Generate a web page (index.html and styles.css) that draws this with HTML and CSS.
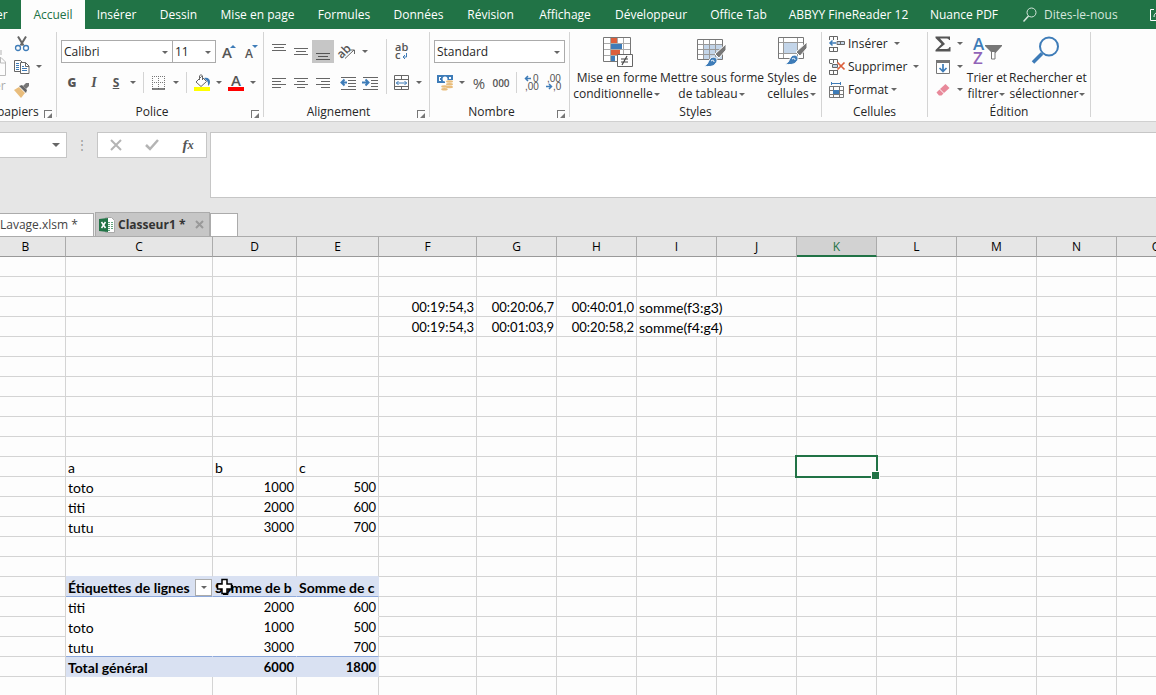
FILE: index.html
```html
<!DOCTYPE html>
<html lang="fr">
<head>
	<meta charset="utf-8">
	<meta name="viewport" content="width=device-width, initial-scale=1.0">
	<title>Classeur1</title>
	<link rel="stylesheet" href="styles.css">
</head>
<body>
	<nav class="tabs">
		<a href="#" class="tab cut">er</a>
		<a href="#" class="tab active">Accueil</a>
		<a href="#" class="tab">Insérer</a>
		<a href="#" class="tab">Dessin</a>
		<a href="#" class="tab">Mise en page</a>
		<a href="#" class="tab">Formules</a>
		<a href="#" class="tab">Données</a>
		<a href="#" class="tab">Révision</a>
		<a href="#" class="tab">Affichage</a>
		<a href="#" class="tab">Développeur</a>
		<a href="#" class="tab">Office Tab</a>
		<a href="#" class="tab">ABBYY FineReader 12</a>
		<a href="#" class="tab">Nuance PDF</a>
		<a href="#" class="tab tell">
			<svg width="16" height="16" viewBox="0 0 16 16" fill="none" stroke="#d5e6dc"><circle cx="9.5" cy="5.500" r="4.500"/><path d="M6.500 9L1.500 14.500" stroke-width="1.500"/></svg>
			Dites-le-nous
		</a>
		<a href="#" class="tab share" title="Partager">
			<svg width="16" height="16" viewBox="0 0 16 16" fill="none" stroke="#fff"><path d="M4 2.500H.5v11h13V9M4 10c0-4 3-5 7-5M8 2l4 3-4 3"/></svg>
		</a>
	</nav>

	<div class="ribbon">
		<section class="group clipboard">
			<div class="body">
				<button class="paste" disabled>
					<svg width="8" height="32" viewBox="0 0 8 32"><path d="M0 4h2v5H0z" fill="#d8d8d8"/><path d="M0 11.500h1l4.500 4.500v13.500H0M0.500 12v5H5" fill="none" stroke="#bbb"/></svg>
					<span>er</span>
				</button>
				<div class="stack">
					<div class="row">
						<button class="btn" title="Couper"><svg width="16" height="16" viewBox="0 0 16 16" fill="none"><path d="M4 0.500l5.500 9M12 0.500l-5.500 9" stroke="#666" stroke-width="2"/><circle cx="4" cy="12" r="2.500" stroke="#3e7cb8" stroke-width="1.300"/><circle cx="12" cy="12" r="2.500" stroke="#3e7cb8" stroke-width="1.300"/></svg></button>
					</div>
					<div class="row">
						<button class="btn" title="Copier"><svg width="16" height="16" viewBox="0 0 16 16" stroke="#666"><path d="M.5 1.500h6l2.500 2.500v8.500H.5z" fill="#fff"/><path d="M2 4.500h3M2 6.500h3M2 8.500h3M2 10.500h3" stroke="#3e7cb8"/><path d="M6.500 3.500h5l3.500 3.500v7.500H6.500z" fill="#fff"/><path d="M11.500 3.500v4H15" fill="none"/><path d="M8 7.500h2M8 9.500h5M8 11.500h5" stroke="#3e7cb8"/></svg></button>
						<span class="caret"></span>
					</div>
					<div class="row">
						<button class="btn" title="Reproduire la mise en forme"><svg width="16" height="16" viewBox="0 0 16 16"><path d="M0 8l5-3 6 6-4 5z" fill="#e9bd7c"/><path d="M5 4l3-1 5 5-1 3z" fill="#666"/><path d="M9 4l3-3h3v3l-3 3z" fill="#777"/></svg></button>
					</div>
				</div>
			</div>
			<footer><span>papiers</span><button class="launch" title="Presse-papiers"></button></footer>
		</section>

		<section class="group font">
			<div class="body lines">
				<div class="row">
					<label class="combo name"><select aria-label="Police"><option>Calibri</option></select></label>
					<label class="combo size"><select aria-label="Taille"><option>11</option></select></label>
					<button class="btn grow" title="Augmenter la taille"><svg width="16" height="18" viewBox="0 0 16 18"><text x="0" y="15" class="glyph" font-size="15">A</text><path d="M8 5l3-3 3 3z" fill="#3e7cb8"/></svg></button>
					<button class="btn" title="Réduire la taille"><svg width="16" height="18" viewBox="0 0 16 18"><text x="1" y="15" class="glyph" font-size="12">A</text><path d="M8 2l3 3 3-3z" fill="#3e7cb8"/></svg></button>
				</div>
				<div class="row">
					<button class="btn bold" title="Gras">G</button>
					<button class="btn italic" title="Italique">I</button>
					<button class="btn under" title="Souligné">S</button>
					<span class="caret"></span>
					<span class="sep"></span>
					<button class="btn" title="Bordures"><svg width="14" height="14" viewBox="0 0 14 14" fill="none" stroke="#777"><path d="M0 .5h13M0 6.500h13M.5 0v13M6.500 0v13M12.500 0v13" stroke-dasharray="1 1"/><path d="M0 13h13" stroke="#555" stroke-width="1.500"/></svg></button>
					<span class="caret"></span>
					<span class="sep"></span>
					<button class="btn" title="Couleur de remplissage"><svg width="16" height="17" viewBox="0 0 16 17"><path d="M2 8l5.500-5.500 5 5-5.500 5z" fill="#fff" stroke="#666"/><path d="M5.500 6V2q1.500-3 3 0v4" fill="none" stroke="#666"/><path d="M10 4c4-1 6 1 6 4 0 2-1 3-2 4 0-3 0-4-1-5z" fill="#3e7cb8"/><path d="M0 13h16v4H0z" fill="#ff0"/></svg></button>
					<span class="caret"></span>
					<button class="btn" title="Couleur de police"><svg width="16" height="17" viewBox="0 0 16 17"><text x="3" y="12" class="glyph" font-size="15">A</text><path d="M0 13h16v4H0z" fill="#f00"/></svg></button>
					<span class="caret"></span>
				</div>
			</div>
			<footer><span>Police</span><button class="launch" title="Police"></button></footer>
		</section>

		<section class="group align">
			<div class="body">
				<div class="lines">
					<div class="row">
						<button class="btn" title="Aligner en haut"><svg width="14" height="18" viewBox="0 0 14 18" stroke="#666"><path d="M0 1.500h14M2 4.500h10M0 7.500h14"/></svg></button>
						<button class="btn" title="Aligner au centre"><svg width="14" height="18" viewBox="0 0 14 18" stroke="#666"><path d="M0 5.500h14M2 8.500h10M0 11.500h14"/></svg></button>
						<button class="btn on" title="Aligner en bas"><svg width="14" height="18" viewBox="0 0 14 18" stroke="#555"><path d="M0 10.500h14M2 13.500h10M0 16.500h14"/></svg></button>
						<button class="btn gap" title="Orientation"><svg width="18" height="18" viewBox="0 0 18 18"><text transform="rotate(-45 6 10)" x="-1" y="12" class="glyph" font-size="12">ab</text><path d="M6 15.500L15 7M11 7h4.500v4" fill="none" stroke="#666"/></svg></button>
						<span class="caret"></span>
					</div>
					<div class="row">
						<button class="btn" title="Aligner à gauche"><svg width="14" height="12" viewBox="0 0 14 12" stroke="#666"><path d="M0 1.500h14M0 4.500h9M0 7.500h14M0 10.500h9"/></svg></button>
						<button class="btn" title="Centrer"><svg width="14" height="12" viewBox="0 0 14 12" stroke="#666"><path d="M0 1.500h14M3 4.500h8M0 7.500h14M3 10.500h8"/></svg></button>
						<button class="btn" title="Aligner à droite"><svg width="14" height="12" viewBox="0 0 14 12" stroke="#666"><path d="M0 1.500h14M5 4.500h9M0 7.500h14M5 10.500h9"/></svg></button>
						<button class="btn gap" title="Diminuer le retrait"><svg width="16" height="14" viewBox="0 0 16 14" stroke="#666"><path d="M1 1.500h15M8 4.500h8M8 7.500h8M8 10.500h8M1 13.500h15"/><path d="M7 6.500H1.500M4.500 3.500l-3 3 3 3" fill="none" stroke="#3e7cb8" stroke-width="2"/></svg></button>
						<button class="btn" title="Augmenter le retrait"><svg width="16" height="14" viewBox="0 0 16 14" stroke="#666"><path d="M1 1.500h15M9 4.500h7M9 7.500h7M9 10.500h7M1 13.500h15"/><path d="M0 6.500h6M3.500 3.500l3 3-3 3" fill="none" stroke="#3e7cb8" stroke-width="2"/></svg></button>
					</div>
				</div>
				<span class="sep tall"></span>
				<div class="lines">
					<div class="row">
						<button class="btn" title="Renvoyer à la ligne"><svg width="14" height="18" viewBox="0 0 14 18"><text x="0" y="8" class="glyph" font-size="11">ab</text><text x="0" y="16" class="glyph" font-size="11">c</text><path d="M11.500 10v4H8M10 12l-2 2 2 2" fill="none" stroke="#3e7cb8"/></svg></button>
					</div>
					<div class="row">
						<button class="btn" title="Fusionner et centrer"><svg width="16" height="16" viewBox="0 0 16 16" fill="none" stroke="#666"><path d="M.5 .5h14v14H.5zM0 4.500h15M0 11.500h15M7.500 0v4.500M7.500 11v4"/><path d="M2 8h11M4.500 6L2.500 8l2 2M10.500 6l2 2-2 2" stroke="#3e7cb8"/></svg></button>
						<span class="caret"></span>
					</div>
				</div>
			</div>
			<footer><span>Alignement</span><button class="launch" title="Alignement"></button></footer>
		</section>

		<section class="group number">
			<div class="body lines">
				<div class="row">
					<label class="combo format"><select aria-label="Format de nombre"><option>Standard</option></select></label>
				</div>
				<div class="row">
					<button class="btn" title="Format monétaire"><svg width="17" height="17" viewBox="0 0 17 17"><path d="M0 1h16v8H0z" fill="#3e7cb8"/><path d="M2 3h2v1H3v2h1v1H2zM12 3h2v2h-2z" fill="#fff"/><circle cx="8" cy="5" r="2.500" fill="#fff"/><path d="M8 6h9v9h-5v2H4v-5h4z" fill="#fdfdfd"/><g fill="#e9bd7c"><ellipse cx="12.500" cy="7.500" rx="3.500" ry="1.200"/><ellipse cx="12.500" cy="10.300" rx="3.500" ry="1.200"/><ellipse cx="12.500" cy="13" rx="3.500" ry="1.200"/><ellipse cx="7.500" cy="12.500" rx="3.300" ry="1.200"/><ellipse cx="7.500" cy="15.300" rx="3.300" ry="1.200"/></g></svg></button>
					<span class="caret"></span>
					<button class="btn percent" title="Pourcentage">%</button>
					<button class="btn thousands" title="Milliers">000</button>
					<span class="sep"></span>
					<button class="btn" title="Ajouter une décimale"><svg width="16" height="16" viewBox="0 0 16 16"><text x="9" y="7" class="glyph thin" font-size="10">0</text><text x="1" y="15" class="glyph thin" font-size="10">,00</text><path d="M7 3.500H1.500M4 1L1.500 3.500 4 6" fill="none" stroke="#3e7cb8" stroke-width="1.500"/></svg></button>
					<button class="btn" title="Réduire les décimales"><svg width="16" height="16" viewBox="0 0 16 16"><text x="1" y="7" class="glyph thin" font-size="10">,00</text><text x="7" y="15" class="glyph thin" font-size="10">,0</text><path d="M0 11.500h5.500M3 9l2.500 2.500L3 14" fill="none" stroke="#3e7cb8" stroke-width="1.500"/></svg></button>
				</div>
			</div>
			<footer><span>Nombre</span><button class="launch" title="Nombre"></button></footer>
		</section>

		<section class="group styles">
			<div class="body">
				<button class="big">
					<svg width="32" height="32" viewBox="0 0 32 32"><path d="M2.500 1.500h27v24h-27z" fill="#fff"/><path d="M9.500 1v25M16.500 1v25M22.500 1v25M2 7.500h28M2 13.500h28M2 19.500h28" stroke="#aaa"/><path d="M10 2h6v5h-6zM10 14h9v5h-9z" fill="#dc5f3c"/><path d="M10 8h11v5H10zM10 20h4v5h-4z" fill="#3e7cb8"/><path d="M2.500 1.500h27v24h-27z" fill="none" stroke="#777"/><path d="M16.500 18.500h15v12h-15z" fill="#fff" stroke="#666"/><path d="M20 23h7M20 26h7M26 20l-5 9" stroke="#444" stroke-width="1.200"/></svg>
					<span>Mise en forme</span><span>conditionnelle<i class="caret"></i></span>
				</button>
				<button class="big">
					<svg width="32" height="32" viewBox="0 0 32 32"><path d="M1.500 3.500h25v20h-25z" fill="#fff"/><path d="M8 9h18v14H8z" fill="#c3d5e9"/><path d="M7.500 4v20M13.500 4v20M19.500 4v20M2 8.500h25M2 13.500h25M2 18.500h25" stroke="#999"/><path d="M1.500 3.500h25v20h-25z" fill="none" stroke="#777"/><path d="M30 8v6l-7 8-4-4z" fill="#777" stroke="#fff"/><path d="M8 30c5-1 4-8 9-9 4 0 5 4 3 6-2 4-8 4-12 3z" fill="#3e7cb8" stroke="#fff"/><path d="M15 25q3-2 3 1" fill="none" stroke="#fff"/></svg>
					<span>Mettre sous forme</span><span>de tableau<i class="caret"></i></span>
				</button>
				<button class="big">
					<svg width="32" height="32" viewBox="0 0 32 32"><path d="M2.500 1.500h25v21h-25z" fill="#fff"/><path d="M8 7h14v10H8z" fill="#c3d5e9"/><path d="M7.500 2v21M21.500 2v21M2 6.500h25M2 17.500h25" stroke="#999"/><path d="M2.500 1.500h25v21h-25z" fill="none" stroke="#777"/><path d="M31 6v6l-7 8-4-4z" fill="#777" stroke="#fff"/><path d="M9 28c5-1 4-8 9-9 4 0 5 4 3 6-2 4-8 4-12 3z" fill="#3e7cb8" stroke="#fff"/><path d="M16 23q3-2 3 1" fill="none" stroke="#fff"/></svg>
					<span>Styles de</span><span>cellules<i class="caret"></i></span>
				</button>
			</div>
			<footer><span>Styles</span></footer>
		</section>

		<section class="group cells">
			<div class="body stack">
				<div class="row">
					<button class="text"><svg width="16" height="16" viewBox="0 0 16 16" fill="none" stroke="#666"><path d="M.5 4V.5h8V4M4.500 0v4M.5 11v4.500h8V11M.5 11.500h8M4.500 11v4"/><path d="M8 5.500h7.500v3H8zM11.500 5.500v3" fill="#c3d5e9"/><path d="M7 7H1M3.500 4.500L1 7l2.500 2.500" stroke="#3e7cb8" stroke-width="1.500"/></svg>Insérer</button><span class="caret far"></span>
				</div>
				<div class="row">
					<button class="text"><svg width="16" height="16" viewBox="0 0 16 16" fill="none" stroke="#666"><path d="M.5 4V.5h8V4M4.500 0v4M.5 11v4.500h8V11M.5 11.500h8M4.500 11v4M.5 4.500h3"/><path d="M3.500 5.500h5v3h-5z" fill="#c3d5e9"/><path d="M8.500 3.500l7 7M15.500 3.500l-7 7" stroke="#dc5f3c" stroke-width="1.700"/></svg>Supprimer</button><span class="caret far"></span>
				</div>
				<div class="row">
					<button class="text"><svg width="16" height="16" viewBox="0 0 16 16" fill="none" stroke="#777"><path d="M.5 4.500h14v11H.5zM0 8.500h15M0 12.500h15M4.500 4v12M10.500 4v12"/><path d="M4 8h6v4H4z" fill="#3e7cb8" stroke="none"/><path d="M2 1.500h10M2.500 0v3M11.500 0v3" stroke="#3e7cb8"/></svg>Format</button><span class="caret"></span>
				</div>
			</div>
			<footer><span>Cellules</span></footer>
		</section>

		<section class="group edit">
			<div class="body">
				<div class="stack">
					<div class="row">
						<button class="btn" title="Somme automatique"><svg width="16" height="16" viewBox="0 0 16 16"><path d="M.5 .5H15V4h-1q0-1.500-2-1.500H5L10 8l-6 5h8q2 0 2.500-2h1V15.500H.5V14l6-6L.5 2z" fill="#555"/></svg></button>
						<span class="caret"></span>
					</div>
					<div class="row">
						<button class="btn" title="Remplissage"><svg width="14" height="16" viewBox="0 0 14 16"><path d="M.5 1.500h13v13H.5z" fill="#fff" stroke="#777"/><path d="M0 1h14v3H0z" fill="#777"/><path d="M7 5v7M3.500 9L7 12.500 10.500 9" fill="none" stroke="#3e7cb8" stroke-width="1.700"/></svg></button>
						<span class="caret"></span>
					</div>
					<div class="row">
						<button class="btn" title="Effacer"><svg width="14" height="14" viewBox="0 0 14 14"><path d="M4 6l5.500-5 4 4L8 10z" fill="#e8899a"/><path d="M3.500 6.500l4 4L5.500 12.500H3L.5 9.500z" fill="#e8899a"/></svg></button>
						<span class="caret"></span>
					</div>
				</div>
				<button class="big">
					<svg width="32" height="32" viewBox="0 0 32 32"><text x="2" y="14" font-size="17" class="letter" fill="#3e7cb8">A</text><text x="2" y="28" font-size="17" class="letter" fill="#9164b8">Z</text><path d="M14 9h17v1l-6.500 7H21l-7-7z" fill="#777"/><path d="M20.500 16v7h3.500v-7" fill="#fff" stroke="#777"/></svg>
					<span>Trier et</span><span>filtrer<i class="caret"></i></span>
				</button>
				<button class="big">
					<svg width="32" height="32" viewBox="0 0 32 32" fill="none" stroke="#3e7cb8"><circle cx="17" cy="10.500" r="9" stroke-width="2"/><path d="M10 17.500L1 26.500" stroke-width="3.500"/></svg>
					<span>Rechercher et</span><span>sélectionner<i class="caret"></i></span>
				</button>
			</div>
			<footer><span>Édition</span></footer>
		</section>
	</div>

	<div class="formula">
		<label class="namebox"><select aria-label="Zone Nom"><option></option></select></label>
		<span class="dots">⋮</span>
		<div class="fxbar">
			<button title="Annuler"><svg width="12" height="12" viewBox="0 0 12 12" stroke="#b4b4b4" stroke-width="2"><path d="M1 1l10 10M11 1L1 11"/></svg></button>
			<button title="Entrer"><svg width="14" height="12" viewBox="0 0 14 12" fill="none" stroke="#b4b4b4" stroke-width="2.500"><path d="M1 6l4 4 8-9"/></svg></button>
			<button title="Insérer une fonction" class="fx">f<small>x</small></button>
		</div>
		<textarea class="input" aria-label="Barre de formule"></textarea>
	</div>

	<div class="books">
		<button class="book first">Lavage.xlsm *</button>
		<button class="book current">
			<svg width="16" height="16" viewBox="0 0 16 16"><path d="M6.500 .5h6l3 3v12h-9z" fill="#fff" stroke="#aaa"/><path d="M9 5.500h2M12 5.500h2M9 7.500h2M12 7.500h2M9 9.500h2M12 9.500h2M9 11.500h2M12 11.500h2M9 13.500h2" stroke="#5fa57c"/><path d="M0 2l9-1v14l-9-1z" fill="#217346"/><path d="M2.500 5l4 6M6.500 5l-4 6" stroke="#fff" stroke-width="1.500"/></svg>
			<span>Classeur1 *</span>
			<svg class="close" width="9" height="9" viewBox="0 0 9 9" stroke="#999" stroke-width="2"><path d="M1 1l7 7M8 1L1 8"/></svg>
		</button>
		<button class="book new" title="Nouveau"></button>
	</div>

	<main class="sheet">
		<table id="grid"></table>
		<svg class="pointer" width="17" height="17" viewBox="0 0 17 17"><path d="M6 1.500h5V6h4.500v5H11v4.500H6V11H1.500V6H6z" fill="#fff" stroke="#000" stroke-width="1.500"/><path d="M7 16.500h5V12h4.500V7" fill="none" stroke="#000"/></svg>
	</main>
	<script src="grid.js"></script>
</body>
</html>
```
FILE: styles.css
```css
* { box-sizing: border-box; }
body { margin: 0; height: 100vh; display: flex; flex-direction: column; overflow: hidden; background: #e6e6e6; color: #262626; font: 12px/16px "Open Sans", sans-serif; }
button, select, textarea { font: inherit; color: inherit; border: 0; padding: 0; margin: 0; background: none; border-radius: 0; }
svg { display: block; flex: none; overflow: visible; }

/* onglets du ruban */
.tabs { display: grid; grid-template-columns: 21px 64px 63px 61px 97px 76px 73px 71px 78px 94px 81px 139px 92px 1fr 16px; height: 29px; background: #217346; flex: none; overflow: hidden; }
.tab { display: flex; align-items: center; justify-content: center; color: #fff; text-decoration: none; white-space: nowrap; }
.tab.cut { justify-content: flex-start; margin-left: -4px; }
.tab.active { background: #fdfdfd; color: #217346; }
.tab.tell { justify-content: flex-start; gap: 6px; padding-left: 12px; color: #d5e6dc; }
.tab.share { justify-content: flex-start; padding-left: 10px; }

/* ruban */
.ribbon { display: flex; height: 93px; flex: none; background: #fdfdfd; border-bottom: 1px solid #d0d0d0; padding: 3px 0 4px; overflow: hidden; }
.group { display: flex; flex-direction: column; flex: none; border-right: 1px solid #d4d4d4; padding-left: 4px; }
.group .body { display: flex; height: 75px; flex: none; }
.clipboard { width: 57px; padding-left: 0; }
.font { width: 207px; }
.align { width: 166px; }
.number { width: 140px; }
.styles { width: 252px; }
.cells { width: 106px; }
.edit { width: 163px; }
.group footer { display: flex; align-items: center; justify-content: center; height: 10px; padding-right: 20px; position: relative; }
.group.clipboard footer { justify-content: flex-start; margin-left: -3px; }
.group.styles footer, .group.cells footer, .group.edit footer { padding-right: 4px; }
.launch { position: absolute; right: 4px; top: 3px; width: 8px; height: 8px; border: solid #777; border-width: 1px 0 0 1px; }
.launch::after { content: ""; position: absolute; right: 0; bottom: 0; border: solid transparent; border-width: 5px 0 0 5px; border-bottom: 0; border-right: 5px solid #777; border-left: 0; }
.row { display: flex; align-items: center; height: 23px; }
.group .lines { display: flex; flex-direction: column; gap: 8px; padding-top: 8px; }
.group .stack { display: flex; flex-direction: column; }
.btn { display: flex; align-items: center; justify-content: center; width: 22px; height: 23px; flex: none; }
.btn.on { background: #c6c6c6; }
.btn.gap { margin-left: 3px; }
.btn.grow { margin-left: 3px; }
.bold { font-weight: 800; color: #555; }
.italic { font: italic bold 14px "Liberation Serif", serif; color: #555; }
.under { font-weight: 700; text-decoration: underline; color: #555; }
.percent { font-size: 15px; color: #555; }
.thousands { font-size: 10px; font-weight: 600; color: #555; }
.glyph { font-family: "Open Sans", sans-serif; font-weight: 600; fill: #555; }
.glyph.thin { font-family: "Liberation Sans", sans-serif; font-weight: 400; }
.letter { font-family: "Open Sans", sans-serif; font-weight: 600; }
.caret { display: flex; align-items: center; justify-content: center; width: 12px; flex: none; }
.caret::before, .combo::after, .namebox::after { content: ""; border: solid transparent; border-width: 3px 3px 0; border-top-color: #666; }
.sep { width: 1px; height: 21px; background: #d4d4d4; margin: 0 4px; }
.sep.tall { height: 55px; margin: 7px 4px 0 5px; }
.combo { position: relative; display: block; height: 23px; border: 1px solid #ababab; background: #fff; }
.combo select { width: 100%; height: 21px; padding-left: 2px; appearance: none; }
.combo::after, .namebox::after { position: absolute; right: 4px; top: 10px; pointer-events: none; }
.combo.name { width: 112px; }
.combo.size { width: 44px; margin-left: -1px; }
.combo.format { width: 131px; }

.paste { width: 11px; color: #aaa; text-align: left; overflow: hidden; }
.paste span { display: block; margin-left: -6px; }
.text { display: flex; align-items: center; gap: 3px; padding-left: 3px; }
.caret.far { margin-left: 3px; }
.big { display: flex; flex-direction: column; align-items: center; padding-top: 4px; white-space: nowrap; line-height: 16px; flex: none; }
.big svg { margin-bottom: 2px; }
.big span { display: flex; align-items: center; }
.big .caret { width: 8px; }
.styles .body { display: grid; grid-template-columns: 86px 104px 56px; }
.edit .body { display: grid; grid-template-columns: 34px 42px 80px; }

/* barre de formule */
.formula { display: flex; align-items: flex-start; padding-top: 10px; height: 90px; flex: none; }
.namebox { position: relative; width: 67px; height: 26px; border: 1px solid #c6c6c6; border-left: 0; background: #fff; }
.namebox select { width: 100%; height: 24px; appearance: none; }
.namebox::after { right: 6px; border-width: 4px 4px 0; }
.dots { width: 30px; text-align: center; line-height: 26px; color: #999; }
.fxbar { display: grid; grid-template-columns: repeat(3, 1fr); width: 110px; height: 26px; border: 1px solid #c6c6c6; background: #fff; margin-right: 3px; }
.fxbar button { display: flex; align-items: center; justify-content: center; }
.fxbar .fx { font: italic bold 15px "Liberation Serif", serif; color: #555; }
.input { flex: 1; height: 66px; border: 1px solid #c6c6c6; border-right: 0; background: #fff; resize: none; }

/* onglets de classeurs */
.books { display: flex; align-items: flex-end; height: 24px; flex: none; }
.book { display: flex; align-items: center; height: 23px; border: 1px solid #ababab; border-bottom: 0; background: #fff; white-space: nowrap; color: #444; }
.book.first { width: 94px; border-left: 0; margin-right: 1px; }
.book.current { width: 115px; height: 24px; padding: 0 5px 0 3px; gap: 3px; background: #c6c6c6; font-weight: 700; color: #333; }
.book .close { margin-left: auto; }
.book.new { width: 28px; }

/* feuille */
.sheet { position: relative; flex: 1; overflow: hidden; background: #fdfdfd; border-top: 1px solid #ababab; color: #000; font: 14px/17px Lato, sans-serif; }
#grid { width: calc(100% + 14px); margin-left: -14px; table-layout: fixed; border-spacing: 0; }
#grid th { height: 20px; padding: 0; font: 12px/18px "Open Sans", sans-serif; background: #e6e6e6; border-right: 1px solid #ababab; border-bottom: 1px solid #999; }
#grid th.sel { background: #d2d2d2; color: #217346; line-height: 17px; border-bottom: 2px solid #217346; }
#grid td { height: 20px; padding: 2px 2px 0; white-space: nowrap; border-right: 1px solid #d4d4d4; border-bottom: 1px solid #d4d4d4; }
#grid td.num { text-align: right; font-size: 13px; }
#grid td.spill { border-right-color: transparent; }
#grid td.over { border-bottom-color: #d9e1f2; }
#grid td.pivot { border-color: transparent; }
#grid td.edge { border-right-color: #d4d4d4; }
#grid td.head, #grid td.total { background: #d9e1f2; font-weight: 700; border-color: #d9e1f2; }
#grid td.head, #grid td.last { border-bottom-color: #8ea9db; }
#grid td.active { position: relative; }
#grid td.active::before { content: ""; position: absolute; inset: -2px; border: 2px solid #217346; }
#grid td.active::after { content: ""; position: absolute; right: -4px; bottom: -4px; width: 7px; height: 7px; background: #217346; border: 1px solid #fdfdfd; }
.head .wrap { display: flex; align-items: center; justify-content: space-between; height: 17px; }
.filter { display: flex; align-items: center; justify-content: center; width: 17px; height: 17px; margin-right: -2px; background: #fff; border: 1px solid #ababab; }
.pointer { position: absolute; left: 216px; top: 341px; }
```
FILE: grid.js
```js
var widths = { B: 80, C: 147, D: 84, E: 82, F: 98 };
var cols = 'BCDEFGHIJKLMNOPQRST'.split('');
var rows = 50;
var active = 'K11';
var data = {
	F3: '00:19:54,3', G3: '00:20:06,7', H3: '00:40:01,0', I3: 'somme(f3:g3)',
	F4: '00:19:54,3', G4: '00:01:03,9', H4: '00:20:58,2', I4: 'somme(f4:g4)',
	C11: 'a', D11: 'b', E11: 'c',
	C12: 'toto', D12: '1000', E12: '500',
	C13: 'titi', D13: '2000', E13: '600',
	C14: 'tutu', D14: '3000', E14: '700',
	C17: 'Étiquettes de lignes', D17: 'Somme de b', E17: 'Somme de c',
	C18: 'titi', D18: '2000', E18: '600',
	C19: 'toto', D19: '1000', E19: '500',
	C20: 'tutu', D20: '3000', E20: '700',
	C21: 'Total général', D21: '6000', E21: '1800'
};

function cellClass(c, r) {
	var k = [], v = data[c + r] || '';
	if (/^\d/.test(v)) k.push('num');
	if (c == 'I' && v) k.push('spill');
	if ('CDE'.indexOf(c) >= 0) {
		if (r == 16) k.push('over');
		if (r == 17) k.push('head');
		if (r >= 18 && r <= 20) k.push('pivot');
		if (r >= 18 && r <= 20 && c == 'E') k.push('edge');
		if (r == 20) k.push('last');
		if (r == 21) k.push('total');
	}
	if (c + r == active) k.push('active');
	return k.join(' ');
}

var html = '<colgroup>';
cols.forEach(function (c) { html += '<col style="width:' + (widths[c] || 80) + 'px">'; });
html += '</colgroup><thead><tr>';
cols.forEach(function (c) { html += '<th scope="col"' + (c == active[0] ? ' class="sel"' : '') + '>' + c + '</th>'; });
html += '</tr></thead><tbody>';
for (var r = 1; r <= rows; r++) {
	html += '<tr>';
	cols.forEach(function (c) {
		var v = data[c + r] || '';
		if (c + r == 'C17') v = '<div class="wrap">' + v + '<button class="filter" title="Filtrer"><span class="caret"></span></button></div>';
		html += '<td class="' + cellClass(c, r) + '">' + v + '</td>';
	});
	html += '</tr>';
}
document.getElementById('grid').innerHTML = html + '</tbody>';
```
